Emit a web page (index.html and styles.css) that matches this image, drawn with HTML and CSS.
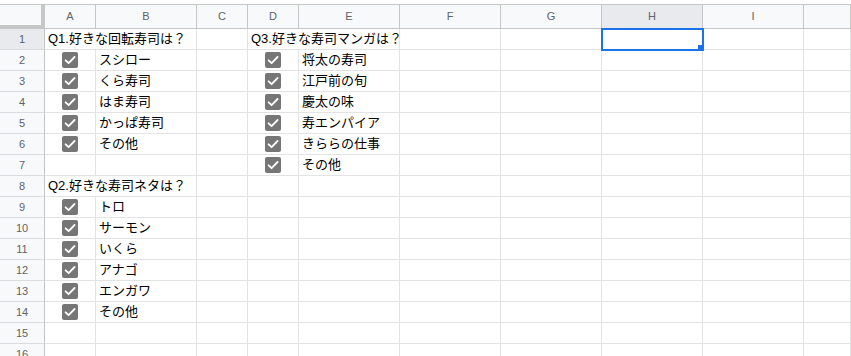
FILE: index.html
```html
<!DOCTYPE html>
<html lang="ja">

<head>
    <meta charset="utf-8">
    <title>寿司アンケート</title>
    <link rel="stylesheet" href="styles.css">
</head>

<body>
    <div class="sheet">
        <div class="top-strip"></div>
        <div class="row head">
            <div class="corner"></div>
            <div class="ch">A</div>
            <div class="ch">B</div>
            <div class="ch">C</div>
            <div class="ch">D</div>
            <div class="ch">E</div>
            <div class="ch">F</div>
            <div class="ch">G</div>
            <div class="ch active">H</div>
            <div class="ch">I</div>
            <div class="ch"></div>
        </div>
        <div id="grid"></div>
    </div>

    <script>
        const grid = document.getElementById('grid');
        const cols = ['A', 'B', 'C', 'D', 'E', 'F', 'G', 'H', 'I', 'J'];

        const q1 = ['スシロー', 'くら寿司', 'はま寿司', 'かっぱ寿司', 'その他'];
        const q2 = ['トロ', 'サーモン', 'いくら', 'アナゴ', 'エンガワ', 'その他'];
        const q3 = ['将太の寿司', '江戸前の旬', '慶太の味', '寿エンパイア', 'きららの仕事', 'その他'];

        const checkSvg = '<svg width="16" height="16" viewBox="0 0 16 16"><rect width="16" height="16" rx="2" fill="#767676"/>' +
            '<path d="M3.6 8.3 L6.6 11.2 L12.6 5" fill="none" stroke="#fff" stroke-width="1.8" stroke-linecap="round" stroke-linejoin="round"/></svg>';

        const rows = [];
        rows[1] = { A: { t: 'Q1.好きな回転寿司は？' }, D: { t: 'Q3.好きな寿司マンガは？' } };
        q1.forEach((t, i) => {
            rows[i + 2] = { A: 'check', B: t, D: 'check', E: q3[i] };
        });
        rows[7] = { D: 'check', E: q3[5] };
        rows[8] = { A: { t: 'Q2.好きな寿司ネタは？' } };
        q2.forEach((t, i) => {
            rows[i + 9] = { A: 'check', B: t };
        });

        for (let n = 1; n <= 16; n++) {
            const row = document.createElement('div');
            row.className = 'row';

            const rh = document.createElement('div');
            rh.className = n === 1 ? 'rh active' : 'rh';
            rh.textContent = n;
            row.appendChild(rh);

            const data = rows[n] || {};
            let skip = 0;
            cols.forEach(c => {
                if (skip > 0) { skip--; return; }
                const cell = document.createElement('div');
                cell.className = 'cell';
                const v = data[c];
                if (v === 'check') {
                    cell.classList.add('check');
                    cell.innerHTML = checkSvg;
                } else if (typeof v === 'string') {
                    cell.classList.add('text');
                    cell.textContent = v;
                } else if (v) {
                    cell.classList.add('text', 'span2');
                    cell.textContent = v.t;
                    skip = 1;
                }
                if (n === 1 && c === 'H') {
                    cell.classList.add('selected');
                    cell.innerHTML = '<div class="sel-box"></div><div class="sel-handle"></div>';
                }
                row.appendChild(cell);
            });
            grid.appendChild(row);
        }
    </script>
</body>

</html>
```

FILE: styles.css
```css
html,
body {
    margin: 0;
    overflow: hidden;
    background: #fff;
}

body {
    font-family: "Liberation Sans", "Noto Sans CJK JP", sans-serif;
}

.top-strip {
    height: 4px;
    border-bottom: 1px solid #c4c7c5;
}

.row {
    display: grid;
    grid-template-columns: 45px 51px 101px 51px 51px 101px 101px 101px 101px 101px 1fr;
    height: 21px;
}

.row > div {
    box-sizing: border-box;
}

/* column headers */
.row.head {
    height: 24px;
}

.corner {
    background: #f8f9fa;
    border-right: 4px solid #c4c7c5;
    border-bottom: 4px solid #c4c7c5;
}

.ch {
    background: #f8f9fa;
    border-right: 1px solid #c4c7c5;
    border-bottom: 1px solid #c4c7c5;
    color: #5f6368;
    font-size: 11px;
    line-height: 23px;
    text-align: center;
}

.ch.active,
.rh.active {
    background: #e8eaed;
}

.ch.active {
    border-bottom-color: #a8c4f0;
}

/* row headers */
.rh {
    background: #f8f9fa;
    border-right: 1px solid #c4c7c5;
    border-bottom: 1px solid #dadce0;
    color: #5f6368;
    font-size: 11px;
    line-height: 20px;
    text-align: center;
}

/* cells */
.cell {
    border-right: 1px solid #e2e3e3;
    border-bottom: 1px solid #e2e3e3;
}

.cell.text {
    padding-left: 3px;
    font-size: 13px;
    line-height: 20px;
    color: #000;
    white-space: nowrap;
}

.cell.span2 {
    grid-column: span 2;
}

.cell.check {
    display: flex;
    align-items: center;
    justify-content: center;
}

.cell.check svg {
    display: block;
}

.cell.selected {
    position: relative;
}

.sel-box {
    position: absolute;
    left: -1px;
    top: -1px;
    width: 103px;
    height: 23px;
    border: 2px solid #1a73e8;
    box-sizing: border-box;
}

.sel-handle {
    position: absolute;
    right: -2px;
    bottom: -2px;
    width: 6px;
    height: 6px;
    background: #1a73e8;
}
```
